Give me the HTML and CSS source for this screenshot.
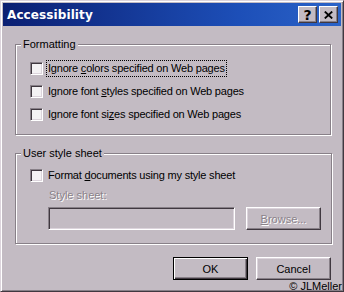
FILE: index.html
```html
<!DOCTYPE html>
<html lang="en">
<head>
    <meta charset="UTF-8">
    <meta name="viewport" content="width=device-width, initial-scale=1.0">
    <title>Accessibility</title>
    <link rel="stylesheet" href="styles.css">
</head>
<body>
    <div class="window">
        <div class="titlebar">
            <span class="title">Accessibility</span>
            <div class="caption-buttons">
                <button class="caption-btn help">?</button>
                <button class="caption-btn close">
                    <svg width="9" height="8" viewBox="0 0 9 8">
                        <path d="M0.8 0.6 L8.2 7.4 M8.2 0.6 L0.8 7.4" stroke="#000" stroke-width="1.9" fill="none"/>
                    </svg>
                </button>
            </div>
        </div>

        <div class="content">
            <fieldset class="group">
                <legend>Formatting</legend>
                <div class="group-body">
                    <div class="check-row">
                        <input type="checkbox" id="ignoreColors">
                        <label for="ignoreColors" class="focused">Ignore <u>c</u>olors specified on Web pages</label>
                    </div>
                    <div class="check-row">
                        <input type="checkbox" id="ignoreStyles">
                        <label for="ignoreStyles">Ignore font <u>s</u>tyles specified on Web pages</label>
                    </div>
                    <div class="check-row">
                        <input type="checkbox" id="ignoreSizes">
                        <label for="ignoreSizes">Ignore font si<u>z</u>es specified on Web pages</label>
                    </div>
                </div>
            </fieldset>

            <fieldset class="group user-sheet">
                <legend>User style sheet</legend>
                <div class="group-body">
                    <div class="check-row">
                        <input type="checkbox" id="useSheet">
                        <label for="useSheet">Format <u>d</u>ocuments using my style sheet</label>
                    </div>
                    <div class="sheet-label">Style sheet:</div>
                    <div class="sheet-row">
                        <input type="text" class="sheet-input" disabled>
                        <button class="btn" disabled><u>B</u>rowse...</button>
                    </div>
                </div>
            </fieldset>

            <div class="actions">
                <button class="btn default">OK</button>
                <button class="btn">Cancel</button>
            </div>
        </div>

        <div class="credit">&copy; JLMeller</div>
    </div>
</body>
</html>
```

FILE: styles.css
```css
:root {
    --face: #c3bbc3;
    --light: #dcd4dc;
    --shadow: #888088;
    --dark: #403840;
    --disabled: #8a828a;
}

body {
    margin: 0;
    font-family: 'Liberation Sans', Arial, sans-serif;
    font-size: 11px;
    color: #000;
}

.window {
    position: relative;
    width: 344px;
    height: 292px;
    box-sizing: border-box;
    background: var(--face);
    border: 1px solid;
    border-color: var(--light) var(--dark) var(--dark) var(--light);
    box-shadow: inset 1px 1px 0 #fff, inset -1px -1px 0 var(--shadow);
    padding: 2px;
    display: flex;
    flex-direction: column;
}

/* title bar */
.titlebar {
    height: 23px;
    display: flex;
    align-items: center;
    justify-content: space-between;
    padding-left: 4px;
    background: linear-gradient(to right, #0b1f72, #1d4fb8 70%, #2b63c8);
}

.title {
    font-family: 'DejaVu Sans', Verdana, sans-serif;
    font-weight: bold;
    font-size: 12px;
    color: #fff;
    letter-spacing: 0.1px;
}

.caption-buttons {
    display: flex;
    gap: 2px;
    margin-right: 3px;
}

.caption-btn {
    width: 19px;
    height: 17px;
    padding: 0;
    background: var(--face);
    border: 1px solid;
    border-color: #fff var(--dark) var(--dark) #fff;
    box-shadow: inset -1px -1px 0 var(--shadow);
    display: flex;
    align-items: center;
    justify-content: center;
    font-family: 'DejaVu Sans', Verdana, sans-serif;
    font-weight: bold;
    font-size: 14px;
    line-height: 1;
    color: #000;
}

/* dialog body */
.content {
    flex: 1;
    padding: 12px 10px 0 12px;
}

.group {
    margin: 0;
    padding: 0;
    border: 1px solid var(--shadow);
    box-shadow: inset 1px 1px 0 #fff, 1px 1px 0 #fff;
}

.group legend {
    margin-left: 5px;
    padding: 0 2px;
    line-height: 13px;
    background: var(--face);
}

.group-body {
    padding: 9px 10px 11px 14px;
    display: flex;
    flex-direction: column;
    gap: 6px;
}

.user-sheet {
    margin-top: 12px;
}

.user-sheet .group-body {
    padding-top: 7px;
    padding-bottom: 13px;
    gap: 0;
}

.check-row {
    display: flex;
    align-items: center;
    height: 17px;
}

.check-row input {
    appearance: none;
    margin: 0;
    width: 13px;
    height: 13px;
    box-sizing: border-box;
    background: #f4f2f4;
    border: 1px solid;
    border-color: var(--shadow) #fff #fff var(--shadow);
    box-shadow: inset 1px 1px 0 var(--dark), inset -1px -1px 0 var(--light);
}

.check-row label {
    margin-left: 3px;
    padding: 0 1px;
    line-height: 15px;
    border: 1px dotted transparent;
    letter-spacing: -0.2px;
}

.check-row label.focused {
    border-color: #000;
}

.sheet-label {
    margin-top: 5px;
    padding-left: 19px;
    line-height: 13px;
    color: var(--disabled);
    text-shadow: 1px 1px 0 #fff;
}

.sheet-row {
    display: flex;
    gap: 11px;
    margin-top: 5px;
    padding-left: 18px;
}

.sheet-input {
    appearance: none;
    margin: 0;
    width: 187px;
    height: 23px;
    box-sizing: border-box;
    background: var(--face);
    border: 1px solid;
    border-color: var(--shadow) #fff #fff var(--shadow);
    box-shadow: inset 1px 1px 0 var(--dark), inset -1px -1px 0 var(--light);
}

/* push buttons */
.btn {
    width: 75px;
    height: 23px;
    padding: 0;
    background: var(--face);
    border: 1px solid;
    border-color: #fff var(--dark) var(--dark) #fff;
    box-shadow: inset -1px -1px 0 var(--shadow), inset 1px 1px 0 var(--light);
    font-family: 'Liberation Sans', Arial, sans-serif;
    font-size: 11px;
    color: #000;
}

.btn:disabled {
    color: var(--disabled);
    text-shadow: 1px 1px 0 #fff;
}

.btn.default {
    border-color: #000;
    box-shadow: inset 1px 1px 0 #fff, inset -1px -1px 0 var(--dark), inset -2px -2px 0 var(--shadow);
}

.actions {
    display: flex;
    justify-content: flex-end;
    gap: 8px;
    margin-top: 13px;
}

.credit {
    position: absolute;
    right: 1px;
    bottom: -1px;
    font-size: 11px;
    line-height: 12px;
    color: #000;
}
```
